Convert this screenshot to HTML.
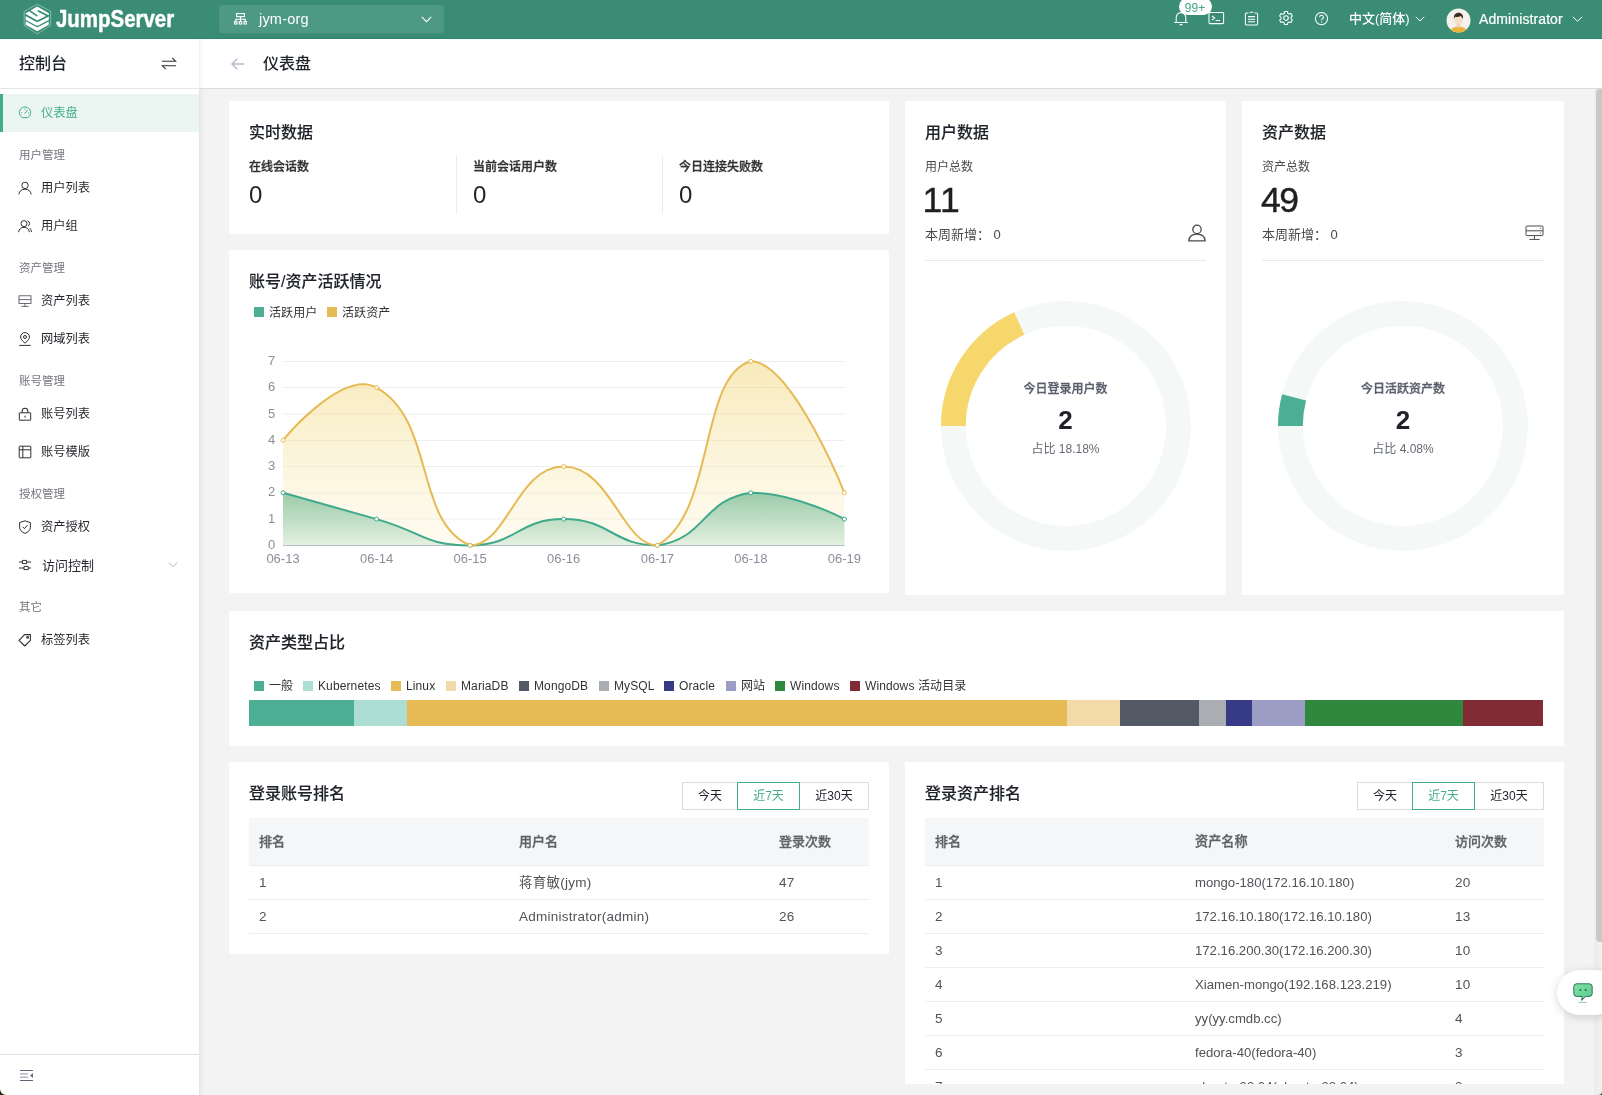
<!DOCTYPE html>
<html lang="zh-CN">
<head>
<meta charset="utf-8">
<title>JumpServer - 仪表盘</title>
<style>
*{box-sizing:border-box;margin:0;padding:0}
html,body{width:1602px;height:1095px;overflow:hidden;background:#f3f3f3}
body{font-family:"Liberation Sans","Noto Sans CJK SC",sans-serif;font-size:12px;color:#303133;position:relative;will-change:transform}
.abs{position:absolute}
svg{display:block;overflow:visible}
/* top nav */
#nav{position:absolute;left:0;top:0;width:1602px;height:39px;background:#3a8d74;color:#fff;border-bottom:1px solid #2d846a}
#logo-text{position:absolute;left:55.5px;top:4.9px;height:28px;line-height:28px;font-weight:700;font-size:23.8px;letter-spacing:0;transform-origin:0 50%;transform:scaleX(.859);-webkit-text-stroke:.45px #fff;white-space:nowrap}
#org{position:absolute;left:219px;top:5px;width:225px;height:28px;border-radius:3px;background:#4e9983}
#org .t{position:absolute;left:40px;top:0;line-height:28.5px;font-size:14.5px;letter-spacing:.2px;color:#fff}
.navtxt{position:absolute;top:0;height:38px;line-height:38px;color:#fff;white-space:nowrap}
#badge{position:absolute;left:1178.5px;top:-2px;width:33px;height:16.5px;border-radius:8.5px;background:#fff;color:#3fa586;font-size:12px;line-height:20px;text-align:center}
/* sidebar */
#side{position:absolute;left:0;top:39px;width:199px;height:1056px;background:#fff}
#side .hd{position:absolute;left:19px;top:12.5px;font-size:16px;line-height:24px;color:#1f2329;font-weight:500}
#side .hl{position:absolute;left:0;top:49px;width:199px;height:1px;background:#e6e6e6}
.mi{position:absolute;left:0;width:199px;height:38px;line-height:39px;font-size:12.25px;color:#26292e;padding-left:41px;white-space:nowrap}
.mi svg{position:absolute;left:18px;top:12px}
.mi.on{background:#ebf6f3;color:#44ad8e;border-left:3px solid #44ad8e;padding-left:38px}
.mi.on svg{left:15px}
.gl{position:absolute;left:19px;font-size:11.5px;line-height:16px;color:#73767d;white-space:nowrap}
#side .fl{position:absolute;left:0;top:1015px;width:199px;height:1px;background:#dedede}
/* main */
#main{position:absolute;left:199px;top:39px;width:1403px;height:1056px;background:#f3f3f3;box-shadow:inset 6px 0 6px -6px rgba(0,0,0,.12)}
#ph{position:absolute;left:199px;top:39px;width:1403px;height:50px;background:#fff;border-bottom:1px solid #dcdcdc;box-shadow:inset 6px 0 6px -6px rgba(0,0,0,.10)}
#ph .t{position:absolute;left:64px;top:12.5px;font-size:16px;line-height:24px;color:#1f2329;font-weight:500}
.card{position:absolute;background:#fff;overflow:hidden}
.ct{position:absolute;left:20px;top:19.5px;font-size:16px;line-height:24px;color:#1f2329;font-weight:500;-webkit-text-stroke:.12px #1f2329;white-space:nowrap}
.lb{position:absolute;font-size:12px;line-height:16px;white-space:nowrap}
.b{font-weight:500;-webkit-text-stroke:.3px currentColor}
.num{position:absolute;font-size:24px;line-height:28px;color:#1f2329}
.vd{position:absolute;top:55px;width:1px;height:58px;background:#ebebeb}
.big{position:absolute;left:19.5px;top:78.5px;font-size:35.5px;line-height:40px;color:#1f1f1f;letter-spacing:-1.6px;-webkit-text-stroke:.4px #1f1f1f}
.wk{position:absolute;left:20px;top:124.5px;font-size:13px;line-height:18px;color:#4a4a4a;white-space:nowrap}
.hr{position:absolute;left:20px;top:158.5px;width:281px;height:1px;background:#e9e9e9}
.dn{position:absolute;text-align:center;white-space:nowrap}
/* legend */
.lg{position:absolute;font-size:12px;line-height:14px;color:#333;letter-spacing:.12px;white-space:nowrap}
.sq{position:absolute;width:10px;height:10px}
/* tables */
.seg{position:absolute;top:20px;height:28px;border:1px solid #d8dce6;background:#fff;font-size:12px;line-height:26.5px;text-align:center;color:#1f2329}
.seg.on{border-color:#44ad8e;color:#44ad8e;z-index:2}
.th{position:absolute;left:20px;top:56px;height:48px;background:#f5f6f7;border-bottom:1px solid #ebeef5}
.th span,.tr span{position:absolute;top:0;white-space:nowrap}
.th span{line-height:47px;font-size:13px;font-weight:500;-webkit-text-stroke:.3px #606266;color:#606266}
.tr{position:absolute;left:20px;height:34px;border-bottom:1px solid #ebeef5}
.tr span{line-height:33px;font-size:13.5px;letter-spacing:.25px;color:#505357}
.c1{left:10px}.c2{left:270px}.c3{left:530px}
.nt .c2{letter-spacing:0;font-size:13.15px}
</style>
</head>
<body>
<div id="main"></div>
<div id="ph">
  <svg class="abs" style="left:32px;top:19px" width="14" height="12" viewBox="0 0 14 12" fill="none" stroke="#b9bccb" stroke-width="1.5"><path d="M13.2 6H1.2M6.4 0.7L1 6l5.4 5.3"/></svg>
  <div class="t">仪表盘</div>
</div>

<!-- ===== cards inserted below ===== -->
<!-- realtime -->
<div class="card" style="left:229px;top:101px;width:660px;height:133px">
  <div class="ct">实时数据</div>
  <div class="lb b" style="left:20px;top:57.5px;color:#303133">在线会话数</div>
  <div class="num" style="left:20px;top:80px">0</div>
  <div class="vd" style="left:227px"></div>
  <div class="lb b" style="left:244px;top:57.5px;color:#303133">当前会话用户数</div>
  <div class="num" style="left:244px;top:80px">0</div>
  <div class="vd" style="left:433px"></div>
  <div class="lb b" style="left:450px;top:57.5px;color:#303133">今日连接失败数</div>
  <div class="num" style="left:450px;top:80px">0</div>
</div>

<!-- line chart -->
<div class="card" style="left:229px;top:250px;width:660px;height:343px">
  <div class="ct">账号/资产活跃情况</div>
  <div class="sq" style="left:25px;top:57px;background:#4caf93"></div><div class="lg" style="left:40px;top:55.500px">活跃用户</div>
  <div class="sq" style="left:98px;top:57px;background:#e6ba54"></div><div class="lg" style="left:113px;top:55.500px">活跃资产</div>
  <svg class="abs" style="left:-229px;top:-250px" width="900" height="600" viewBox="0 0 900 600">
    <defs>
      <linearGradient id="gy" x1="0" y1="0" x2="0" y2="1"><stop offset="0" stop-color="#efd066" stop-opacity=".45"/><stop offset="1" stop-color="#fdf3d0" stop-opacity=".3"/></linearGradient>
      <linearGradient id="gg" x1="0" y1="0" x2="0" y2="1"><stop offset="0" stop-color="#3fa98b" stop-opacity=".78"/><stop offset="1" stop-color="#d3ece2" stop-opacity=".8"/></linearGradient>
    </defs>
    <g stroke="#eeeeee" stroke-width="1"><path d="M283 361.500h561.500M283 387.500h561.500M283 414h561.500M283 440.500h561.500M283 466.500h561.500M283 493h561.500M283 519h561.500"/></g>
    <path d="M283 545.500h561.500" stroke="#8d91a3" stroke-width="1"/>
    <path fill="url(#gg)" d="M283.00,492.80 C283.00,492.80 329.78,505.95 376.57,519.10 C423.35,532.25 423.35,545.40 470.13,545.40 C516.92,545.40 516.92,519.10 563.70,519.10 C610.48,519.10 612.80,545.40 657.27,545.40 C706.37,538.50 701.73,499.70 750.83,492.80 C795.30,492.80 844.40,519.10 844.40,519.10 L844.4,545.4 L283,545.4 Z"/>
    <path id="ya" fill="url(#gy)" d="M283.00,440.20 C283.00,440.20 342.03,368.18 376.57,387.60 C435.60,420.78 414.01,521.74 470.13,545.40 C507.58,545.40 516.92,466.50 563.70,466.50 C610.48,466.50 622.45,545.40 657.27,545.40 C716.02,512.37 698.31,376.06 750.83,361.30 C791.88,361.30 844.40,492.80 844.40,492.80 L844.4,545.4 L283,545.4 Z"/>
    <path fill="none" stroke="#3fa98b" stroke-width="2" d="M283.00,492.80 C283.00,492.80 329.78,505.95 376.57,519.10 C423.35,532.25 423.35,545.40 470.13,545.40 C516.92,545.40 516.92,519.10 563.70,519.10 C610.48,519.10 612.80,545.40 657.27,545.40 C706.37,538.50 701.73,499.70 750.83,492.80 C795.30,492.80 844.40,519.10 844.40,519.10"/>
    <path fill="none" stroke="#e6ba54" stroke-width="2" d="M283.00,440.20 C283.00,440.20 342.03,368.18 376.57,387.60 C435.60,420.78 414.01,521.74 470.13,545.40 C507.58,545.40 516.92,466.50 563.70,466.50 C610.48,466.50 622.45,545.40 657.27,545.40 C716.02,512.37 698.31,376.06 750.83,361.30 C791.88,361.30 844.40,492.80 844.40,492.80"/>
    <g fill="#fff" stroke="#3fa98b" stroke-width="1"><circle cx="283.0" cy="492.8" r="2"/><circle cx="376.6" cy="519.1" r="2"/><circle cx="470.1" cy="545.4" r="2"/><circle cx="563.7" cy="519.1" r="2"/><circle cx="657.3" cy="545.4" r="2"/><circle cx="750.8" cy="492.8" r="2"/><circle cx="844.4" cy="519.1" r="2"/></g>
    <g fill="#fff" stroke="#e6ba54" stroke-width="1"><circle cx="283.0" cy="440.2" r="2"/><circle cx="376.6" cy="387.6" r="2"/><circle cx="470.1" cy="545.4" r="2"/><circle cx="563.7" cy="466.5" r="2"/><circle cx="657.3" cy="545.4" r="2"/><circle cx="750.8" cy="361.3" r="2"/><circle cx="844.4" cy="492.8" r="2"/></g>
    <g font-family="Liberation Sans, sans-serif" font-size="13" fill="#8b8f9c" text-anchor="end">
      <text x="275.300" y="364.6">7</text><text x="275.300" y="391.1">6</text><text x="275.300" y="417.6">5</text><text x="275.300" y="443.6">4</text><text x="275.300" y="470.1">3</text><text x="275.300" y="496.1">2</text><text x="275.300" y="522.6">1</text><text x="275.300" y="548.6">0</text>
    </g>
    <g font-family="Liberation Sans, sans-serif" font-size="13" fill="#8b8f9c" text-anchor="middle">
      <text x="283" y="563">06-13</text><text x="376.600" y="563">06-14</text><text x="470.100" y="563">06-15</text><text x="563.700" y="563">06-16</text><text x="657.300" y="563">06-17</text><text x="750.800" y="563">06-18</text><text x="844.400" y="563">06-19</text>
    </g>
  </svg>
</div>

<!-- user data -->
<div class="card" style="left:905px;top:101px;width:321px;height:494px">
  <div class="ct">用户数据</div>
  <div class="lb" style="left:20px;top:57.5px;color:#4a4a4a">用户总数</div>
  <div class="big" style="left:17.500px;letter-spacing:.4px">11</div>
  <div class="wk">本周新增： 0</div>
  <svg class="abs" style="left:283px;top:123px" width="18" height="18" viewBox="0 0 18 18" fill="none" stroke="#4a4a4a" stroke-width="1.300"><circle cx="9" cy="5.400" r="4.200"/><path d="M.8 16.800c.4-4 3.600-6.600 8.200-6.600s7.800 2.600 8.200 6.600z" stroke-linejoin="round"/></svg>
  <div class="hr"></div>
  <svg class="abs" style="left:0;top:0" width="321" height="494" viewBox="0 0 321 494">
    <circle cx="160.900" cy="324.900" r="112.500" fill="none" stroke="#f4f8f7" stroke-width="24.8"/>
    <circle cx="160.900" cy="324.900" r="112.500" fill="none" stroke="#f5d76c" stroke-width="24.8" stroke-dasharray="128.510 706.860" transform="rotate(180 160.900 324.900)"/>
  </svg>
  <div class="dn b" style="left:60px;width:201px;top:279.5px;font-size:12px;line-height:16px;color:#595e6b">今日登录用户数</div>
  <div class="dn b" style="left:60px;width:201px;top:304px;font-size:26px;line-height:30px;color:#1f2329;font-weight:700;-webkit-text-stroke:0">2</div>
  <div class="dn" style="left:60px;width:201px;top:339.5px;font-size:12px;line-height:16px;color:#646a73">占比 18.18%</div>
</div>

<!-- asset data -->
<div class="card" style="left:1242px;top:101px;width:322px;height:494px">
  <div class="ct">资产数据</div>
  <div class="lb" style="left:20px;top:57.5px;color:#4a4a4a">资产总数</div>
  <div class="big" style="left:19px">49</div>
  <div class="wk">本周新增： 0</div>
  <svg class="abs" style="left:283px;top:124px" width="19" height="16" viewBox="0 0 19 16" fill="none" stroke="#4a4a4a" stroke-width="1"><rect x="1" y="1" width="17" height="9.600" rx=".8"/><path d="M1 5.800h17M9.500 10.600v3.400M4.400 14.400h10.200"/><path d="M15.300 3.400h.8M15.300 8.200h.8" stroke-width="1.200"/></svg>
  <div class="hr" style="width:282px"></div>
  <svg class="abs" style="left:0;top:0" width="322" height="494" viewBox="0 0 322 494">
    <circle cx="160.900" cy="324.900" r="112.500" fill="none" stroke="#f4f8f7" stroke-width="24.8"/>
    <circle cx="160.900" cy="324.900" r="112.500" fill="none" stroke="#4caf93" stroke-width="24.8" stroke-dasharray="28.840 706.860" transform="rotate(180 160.900 324.900)"/>
  </svg>
  <div class="dn b" style="left:60px;width:202px;top:279.5px;font-size:12px;line-height:16px;color:#595e6b">今日活跃资产数</div>
  <div class="dn b" style="left:60px;width:202px;top:304px;font-size:26px;line-height:30px;color:#1f2329;font-weight:700;-webkit-text-stroke:0">2</div>
  <div class="dn" style="left:60px;width:202px;top:339.5px;font-size:12px;line-height:16px;color:#646a73">占比 4.08%</div>
</div>

<!-- asset type -->
<div class="card" style="left:229px;top:611px;width:1335px;height:135px">
  <div class="ct">资产类型占比</div>
  <div class="sq" style="left:25px;top:69.500px;background:#4caf93"></div><div class="lg" style="left:40px;top:68px">一般</div>
  <div class="sq" style="left:74px;top:69.500px;background:#acded3"></div><div class="lg" style="left:89px;top:68px">Kubernetes</div>
  <div class="sq" style="left:162px;top:69.500px;background:#e6ba54"></div><div class="lg" style="left:177px;top:68px">Linux</div>
  <div class="sq" style="left:217px;top:69.500px;background:#f3dba9"></div><div class="lg" style="left:232px;top:68px">MariaDB</div>
  <div class="sq" style="left:290px;top:69.500px;background:#535a65"></div><div class="lg" style="left:305px;top:68px">MongoDB</div>
  <div class="sq" style="left:370px;top:69.500px;background:#aaadb2"></div><div class="lg" style="left:385px;top:68px">MySQL</div>
  <div class="sq" style="left:435px;top:69.500px;background:#373a86"></div><div class="lg" style="left:450px;top:68px">Oracle</div>
  <div class="sq" style="left:497px;top:69.500px;background:#9b9dc4"></div><div class="lg" style="left:512px;top:68px">网站</div>
  <div class="sq" style="left:546px;top:69.500px;background:#2f883e"></div><div class="lg" style="left:561px;top:68px">Windows</div>
  <div class="sq" style="left:621px;top:69.500px;background:#812b34"></div><div class="lg" style="left:636px;top:68px">Windows 活动目录</div>
  
  <div class="abs" style="left:20.2px;top:89.400px;width:105.0px;height:25.600px;background:#4caf93"></div><div class="abs" style="left:124.9px;top:89.400px;width:53.8px;height:25.600px;background:#acded3"></div><div class="abs" style="left:178.4px;top:89.400px;width:660.2px;height:25.600px;background:#e6ba54"></div><div class="abs" style="left:838.3px;top:89.400px;width:53.1px;height:25.600px;background:#f3dba9"></div><div class="abs" style="left:891.1px;top:89.400px;width:79.5px;height:25.600px;background:#535a65"></div><div class="abs" style="left:970.3px;top:89.400px;width:26.7px;height:25.600px;background:#aaadb2"></div><div class="abs" style="left:996.7px;top:89.400px;width:26.7px;height:25.600px;background:#373a86"></div><div class="abs" style="left:1023.1px;top:89.400px;width:53.1px;height:25.600px;background:#9b9dc4"></div><div class="abs" style="left:1075.9px;top:89.400px;width:158.7px;height:25.600px;background:#2f883e"></div><div class="abs" style="left:1234.3px;top:89.400px;width:79.5px;height:25.600px;background:#812b34"></div>
</div>

<!-- login account rank -->
<div class="card" style="left:229px;top:762px;width:660px;height:192px">
  <div class="ct">登录账号排名</div>
  <div class="seg" style="left:453px;width:56px">今天</div>
  <div class="seg on" style="left:508px;width:63px">近7天</div>
  <div class="seg" style="left:570px;width:70px">近30天</div>
  <div class="th" style="width:620px"><span class="c1">排名</span><span class="c2">用户名</span><span class="c3">登录次数</span></div>
  <div class="tr" style="top:104px;width:620px"><span class="c1">1</span><span class="c2">蒋育敏(jym)</span><span class="c3">47</span></div>
  <div class="tr" style="top:138px;width:620px"><span class="c1">2</span><span class="c2">Administrator(admin)</span><span class="c3">26</span></div>
</div>

<!-- login asset rank -->
<div class="card nt" style="left:905px;top:762px;width:659px;height:322px">
  <div class="ct">登录资产排名</div>
  <div class="seg" style="left:452px;width:56px">今天</div>
  <div class="seg on" style="left:507px;width:63px">近7天</div>
  <div class="seg" style="left:569px;width:70px">近30天</div>
  <div class="th" style="width:619px"><span class="c1">排名</span><span class="c2">资产名称</span><span class="c3">访问次数</span></div>
  <div class="tr" style="top:104px;width:619px"><span class="c1">1</span><span class="c2">mongo-180(172.16.10.180)</span><span class="c3">20</span></div>
  <div class="tr" style="top:138px;width:619px"><span class="c1">2</span><span class="c2">172.16.10.180(172.16.10.180)</span><span class="c3">13</span></div>
  <div class="tr" style="top:172px;width:619px"><span class="c1">3</span><span class="c2">172.16.200.30(172.16.200.30)</span><span class="c3">10</span></div>
  <div class="tr" style="top:206px;width:619px"><span class="c1">4</span><span class="c2">Xiamen-mongo(192.168.123.219)</span><span class="c3">10</span></div>
  <div class="tr" style="top:240px;width:619px"><span class="c1">5</span><span class="c2">yy(yy.cmdb.cc)</span><span class="c3">4</span></div>
  <div class="tr" style="top:274px;width:619px"><span class="c1">6</span><span class="c2">fedora-40(fedora-40)</span><span class="c3">3</span></div>
  <div class="tr" style="top:308px;width:619px"><span class="c1">7</span><span class="c2">ubuntu-22.04(ubuntu-22.04)</span><span class="c3">3</span></div>
</div>

<!-- scrollbar -->
<div class="abs" style="left:1594px;top:88.500px;width:8px;height:1006.500px;background:linear-gradient(90deg,#ececec,#f1f1f1)"></div>
<div class="abs" style="left:1596px;top:89px;width:8px;height:853px;border-radius:4px;background:#c8c8c8"></div>

<!-- chat float -->
<div class="abs" style="left:1557px;top:970px;width:60px;height:45px;border-radius:22.500px;background:#fff;box-shadow:0 2px 10px rgba(0,0,0,.16)">
  <svg class="abs" style="left:15px;top:12px" width="22" height="22" viewBox="0 0 22 22"><defs><linearGradient id="cg" x1="0" y1="0" x2="1" y2="1"><stop offset="0" stop-color="#7fe3a8"/><stop offset="1" stop-color="#59c88a"/></linearGradient></defs><path d="M4.600 1.800h12.800a2.800 2.800 0 0 1 2.800 2.800v7a2.800 2.800 0 0 1-2.800 2.800h-3.600L9.600 18.400l.6-4H4.600a2.800 2.800 0 0 1-2.800-2.800v-7a2.800 2.800 0 0 1 2.800-2.800z" fill="url(#cg)" stroke="#2c5f54" stroke-width=".9" stroke-linejoin="round"/><circle cx="8.400" cy="8" r="1" fill="#2c5f54"/><circle cx="13.600" cy="8" r="1" fill="#2c5f54"/><path d="M6.400 20.400h8.400" stroke="#6fbf98" stroke-width=".8"/></svg>
</div>


<div id="side">
  <div class="hd">控制台</div>
  <svg class="abs" style="left:161px;top:18px" width="16" height="13" viewBox="0 0 16 13" fill="none" stroke="#303133" stroke-width="1.1"><path d="M1 4.2h13.6L11.2 0.8M15 8.8H1.4l3.4 3.4"/></svg>
  <div class="hl"></div>
    <div class="mi on" style="top:55px"><svg width="14" height="14" viewBox="0 0 14 14" fill="none" stroke="#44ad8e" stroke-width="1"><path d="M4.260 11.600A5.700 5.700 0 1 1 9.740 11.600zM6.500 7.600l2.900-3.400M2.900 7h1.100M10 7h1.100M7 2.700v1.100" stroke-linejoin="round"/></svg>仪表盘</div>
  <div class="gl" style="top:108px">用户管理</div>
  <div class="mi" style="top:130px"><svg width="14" height="14" viewBox="0 0 14 14" fill="none" stroke="#303133" stroke-width="1"><circle cx="7" cy="4.400" r="3.200"/><path d="M.8 13.400c.6-3.400 2.800-5.200 6.200-5.200s5.600 1.800 6.200 5.200"/></svg>用户列表</div>
  <div class="mi" style="top:168px"><svg width="14" height="14" viewBox="0 0 14 14" fill="none" stroke="#303133" stroke-width="1"><circle cx="6" cy="4.600" r="3"/><path d="M.6 13.200c.5-3.200 2.400-4.900 5.400-4.900s4.900 1.700 5.400 4.900M9.600 1.800a3 3 0 0 1 .4 5.400M11.600 9c1 .8 1.600 2.200 1.900 4"/></svg>用户组</div>
  <div class="gl" style="top:221px">资产管理</div>
  <div class="mi" style="top:243px"><svg width="14" height="14" viewBox="0 0 14 14" fill="none" stroke="#44474d" stroke-width=".8"><rect x="1" y="1.800" width="12" height="7.600"/><path d="M1 5.600h12M7 9.400v2.800M3.400 12.400h7.200"/></svg>资产列表</div>
  <div class="mi" style="top:281px"><svg width="14" height="14" viewBox="0 0 14 14" fill="none" stroke="#303133" stroke-width="1"><path d="M7 11.200C4 8.600 2.600 6.800 2.600 5a4.400 4.400 0 0 1 8.800 0c0 1.800-1.400 3.600-4.400 6.200z"/><circle cx="7" cy="5" r="1.500"/><path d="M1.200 13.400h11.600"/></svg>网域列表</div>
  <div class="gl" style="top:334px">账号管理</div>
  <div class="mi" style="top:356px"><svg width="14" height="14" viewBox="0 0 14 14" fill="none" stroke="#303133" stroke-width="1"><rect x="1.300" y="5.800" width="11.400" height="7.400" rx=".3"/><path d="M4.200 5.800V4a2.800 2.800 0 0 1 5.600 0v1.800M7 8.800v1.700" stroke-width="1.100"/></svg>账号列表</div>
  <div class="mi" style="top:394px"><svg width="14" height="14" viewBox="0 0 14 14" fill="none" stroke="#303133" stroke-width="1"><rect x="1.200" y="1.200" width="11.600" height="11.600" rx=".6"/><path d="M1.200 4.800h11.600M4.800 1.200v11.600"/></svg>账号模版</div>
  <div class="gl" style="top:447px">授权管理</div>
  <div class="mi" style="top:469px"><svg width="14" height="14" viewBox="0 0 14 14" fill="none" stroke="#303133" stroke-width="1"><path d="M7 .8l5.400 1.800v4.600c0 2.800-2 4.800-5.400 6.200C3.600 12 1.600 10 1.600 7.200V2.600z" stroke-linejoin="round"/><path d="M4.600 6.800l1.800 1.800 3.200-3.400"/></svg>资产授权</div>
  <div class="mi" style="top:507px;padding-left:42px;font-size:13px"><svg width="14" height="14" viewBox="0 0 14 14" fill="none" stroke="#303133" stroke-width="1"><path d="M1 4h3.400M8.600 4H13M1 10h5M10.200 10H13M4.400 2.400h4.200v3.200H4.400zM6 8.400h4.200v3.200H6z"/></svg>访问控制
    <svg style="left:168px;top:16px" width="10" height="6" viewBox="0 0 10 6" fill="none" stroke="#b4b7c0" stroke-width="1"><path d="M.8.600l4.200 4.200L9.200.600"/></svg></div>
  <div class="gl" style="top:560px">其它</div>
  <div class="mi" style="top:582px"><svg width="14" height="14" viewBox="0 0 14 14" fill="none" stroke="#303133" stroke-width="1.100"><path d="M1 7.400L6.600 1.600h5.800v5.800L6.800 13z" stroke-linejoin="round" transform="rotate(0 7 7)"/><circle cx="9.600" cy="4.400" r=".9"/></svg>标签列表</div>

  <div class="fl"></div>
  <svg class="abs" style="left:20px;top:1030px" width="13" height="12" viewBox="0 0 13 12" fill="none" stroke="#5f6373"><path d="M0 1.500h13M0 11.500h13" stroke-width="1"/><path d="M0 4.900h8M0 8.200h8" stroke-width="1" stroke="#8f93a0"/><path d="M13 4.100v4.800L10 6.500z" fill="#6b6f7e" stroke="none"/></svg>
</div>

<div id="nav">
    <svg class="abs" style="left:0;top:0" width="60" height="38" viewBox="0 0 60 38">
    <polygon points="37.25,4.2 50.7,11.3 50.7,25.5 37.25,33.9 24.2,25.5 24.2,11.3" fill="none" stroke="#fff" stroke-opacity=".55" stroke-width=".7"/>
    <polygon points="37.25,6.4 48.8,13.2 48.8,24.8 37.25,31.3 25.7,24.8 25.7,13.2" fill="#fff"/>
    <g fill="none" stroke="#2f8a6f" stroke-linejoin="round" stroke-linecap="butt">
      <path d="M25.2,14.7 L36,20.7 Q37.25,21.4 38.5,20.7 L48.9,15.5" stroke-width="1.7"/>
      <path d="M25.2,20.2 L36.2,26.2 Q37.25,26.8 38.3,26.2 L48.9,20.6" stroke-width="1.25"/>
      <path d="M28.8,10.2 L36.8,15.6" stroke-width="1.6" stroke-linecap="round"/>
      <path d="M37.8,10.7 L47.8,15.7" stroke-width="1.6"/>
    </g>
  </svg>
  <div id="logo-text">JumpServer</div>
  <div id="org">
    <svg class="abs" style="left:15px;top:8px" width="13" height="12" viewBox="0 0 13 12" fill="none" stroke="#fff" stroke-width="1.1"><rect x="2.600" y=".6" width="7.800" height="3"/><path d="M6.5 3.8v2.4M1.8 8.6V6.2h9.4v2.4M6.5 6.2v2.4"/><rect x=".6" y="8.6" width="2.4" height="2.4"/><rect x="5.3" y="8.6" width="2.4" height="2.4"/><rect x="10" y="8.6" width="2.4" height="2.4"/></svg>
    <div class="t">jym-org</div>
    <svg class="abs" style="left:202px;top:11px" width="11" height="7" viewBox="0 0 11 7" fill="none" stroke="#fff" stroke-width="1.1"><path d="M.8.8l4.7 4.8L10.2.8"/></svg>
  </div>
  <!-- bell -->
  <svg class="abs" style="left:1173px;top:11px" width="16" height="16" viewBox="0 0 16 16" fill="none" stroke="#fff" stroke-width="1.05"><path d="M3.2 11.2V6.4a4.8 4.8 0 0 1 9.6 0v4.8M1.2 11.4h13.6M6.6 13.6h2.8"/></svg>
  <div id="badge">99+</div>
  <!-- terminal -->
  <svg class="abs" style="left:1208px;top:11px" width="16" height="14" viewBox="0 0 16 14" fill="none" stroke="#fff" stroke-width="1.05"><rect x="1" y="1.4" width="14.6" height="11.2" rx="1"/><path d="M4 5l2.6 2L4 9M7.6 9.4h4.4"/></svg>
  <!-- clipboard -->
  <svg class="abs" style="left:1244px;top:11px" width="15" height="15" viewBox="0 0 15 15" fill="none" stroke="#fff" stroke-width="1.05"><path d="M4.4 1.9H2.6a1.2 1.2 0 0 0-1.2 1.2v9.6a1.2 1.2 0 0 0 1.2 1.2h9.8a1.2 1.2 0 0 0 1.2-1.2V3.1a1.2 1.2 0 0 0-1.2-1.2h-1.8M5.6 1.2h3.8M4 5.6h7M4 8.2h7M4 10.8h7"/></svg>
  <!-- gear -->
  <svg class="abs" style="left:1278px;top:10px" width="16" height="16" viewBox="0 0 16 16" fill="none" stroke="#fff" stroke-width="1.05"><circle cx="8" cy="8.1" r="2.3"/><path d="M6.6 1.5h2.8l.5 1.9 1.2.7 1.9-.6 1.4 2.4-1.4 1.4v1.4l1.4 1.4-1.4 2.4-1.9-.6-1.2.7-.5 1.9H6.6l-.5-1.9-1.2-.7-1.9.6-1.4-2.4L3 8.8V7.400L1.600 6l1.400-2.400 1.900.600 1.200-.7z" stroke-linejoin="round"/></svg>
  <!-- help -->
  <svg class="abs" style="left:1314px;top:11px" width="15" height="15" viewBox="0 0 15 15" fill="none" stroke="#fff" stroke-width="1.05"><circle cx="7.5" cy="7.6" r="6.1"/><path d="M5.6 6.200a1.900 1.900 0 1 1 2.700 1.700c-.6.300-.8.600-.8 1.300M7.500 10.600v1"/></svg>
  <div class="navtxt" style="left:1349px;font-size:13px;font-weight:500">中文(简体)</div>
  <svg class="abs" style="left:1415px;top:16px" width="10" height="7" viewBox="0 0 10 7" fill="none" stroke="#fff" stroke-width="1"><path d="M.8.8l4.200 4.200L9.200.8"/></svg>
  <svg class="abs" style="left:1446px;top:8px" width="25" height="25" viewBox="0 0 25 25"><defs><clipPath id="avc"><circle cx="12.500" cy="12.500" r="12"/></clipPath></defs><circle cx="12.500" cy="12.500" r="12" fill="#f4f1ee"/><g clip-path="url(#avc)"><path d="M3.500 26c0-5 4-7.500 9-7.500s9 2.500 9 7.500z" fill="#e9b43c"/><rect x="10.600" y="15" width="3.800" height="4.500" fill="#f2cfb5"/><ellipse cx="12.500" cy="11.800" rx="4.200" ry="4.800" fill="#f7dcc6"/><path d="M8 11c-.5-4 1.500-6.200 4.600-6.200 3.200 0 4.900 2.300 4.400 6.200-.8-1.600-1.600-2.600-2.400-3.100-1.600.9-4.400 1.200-5.400.9-.5.500-.9 1.300-1.200 2.200z" fill="#3b2a25"/></g></svg>
  <div class="navtxt" style="left:1479px;top:0;font-size:14px;letter-spacing:.1px;-webkit-text-stroke:.2px #fff">Administrator</div>
  <svg class="abs" style="left:1572px;top:16px" width="11" height="7" viewBox="0 0 11 7" fill="none" stroke="#fff" stroke-width="1"><path d="M.8.8l4.700 4.400L10.200.8"/></svg>

</div>
<svg class="abs" style="left:0;top:1089px;z-index:9" width="6" height="6" viewBox="0 0 6 6"><path d="M0 0A6 6 0 0 0 6 6H0z" fill="#24240c"/></svg>
<svg class="abs" style="left:1598px;top:1091px;z-index:9" width="4" height="4" viewBox="0 0 4 4"><path d="M4 0A4 4 0 0 1 0 4H4z" fill="#4a4a4a"/></svg>
</body>
</html>
